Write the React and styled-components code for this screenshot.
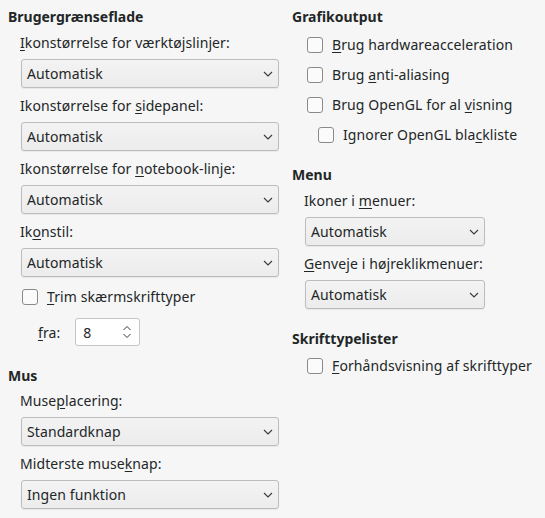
import styled, { createGlobalStyle } from "styled-components";

const GlobalStyle = createGlobalStyle`
  html, body {
    margin: 0;
    padding: 0;
    background: #f6f6f6;
  }
  body {
    font-family: "Noto Sans", "DejaVu Sans", sans-serif;
    font-size: 14px;
    letter-spacing: 0.1px;
    color: #232627;
  }
`;

const Page = styled.div`
  width: 545px;
  height: 518px;
  box-sizing: border-box;
  padding: 7px 0 0 8px;
  display: grid;
  grid-template-columns: 284px 1fr;
  overflow: hidden;
`;

const Column = styled.div`
  display: flex;
  flex-direction: column;
  gap: 20px;
`;

const Section = styled.section`
  display: flex;
  flex-direction: column;
`;

const Title = styled.div`
  font-weight: bold;
  letter-spacing: 0;
  line-height: 20px;
  height: 20px;
  margin-bottom: ${({ $gap }) => $gap ?? 6}px;
`;

const Body = styled.div`
  display: flex;
  flex-direction: column;
  gap: ${({ $gap }) => $gap ?? 8}px;
  padding-left: ${({ $indent }) => $indent ?? 12}px;
`;

const Field = styled.div`
  display: flex;
  flex-direction: column;
  gap: 6px;
`;

const Label = styled.div`
  line-height: 20px;
  height: 20px;
  white-space: nowrap;
`;

const Key = styled.span`
  text-decoration: underline;
  text-underline-offset: 2px;
`;

const Combo = styled.div`
  width: ${({ $width }) => $width}px;
  height: 29px;
  box-sizing: border-box;
  margin-left: 1px;
  border: 1px solid #bcbcbc;
  border-radius: 3px;
  background: linear-gradient(#f3f3f3, #ececec);
  box-shadow: 0 1px 1px rgba(0, 0, 0, 0.06);
  display: flex;
  align-items: center;
  justify-content: space-between;
  padding: 0 5px 0 5px;
  line-height: 20px;
`;

const Chevron = () => (
  <svg width="10" height="6" viewBox="0 0 10 6">
    <path d="M1 1 L5 5 L9 1" fill="none" stroke="#3a3a3a" strokeWidth="1.1" />
  </svg>
);

const CheckRow = styled.label`
  display: flex;
  align-items: center;
  gap: 9px;
  height: 20px;
  line-height: 20px;
  margin-top: ${({ $top }) => $top ?? 0}px;
  padding-left: ${({ $indent }) => $indent ?? 2}px;
  white-space: nowrap;
`;

const Box = styled.span`
  width: 16px;
  height: 16px;
  box-sizing: border-box;
  border: 1px solid #8a8a8a;
  border-radius: 3px;
  background: #fbfbfb;
  flex: none;
`;

const SpinRow = styled.div`
  display: flex;
  align-items: center;
  gap: 15px;
  padding-left: 18px;
  margin-top: 3px;
`;

const Spin = styled.div`
  width: 65px;
  height: 28px;
  box-sizing: border-box;
  border: 1px solid #c4c4c4;
  border-radius: 3px;
  background: #fff;
  display: flex;
  align-items: center;
  justify-content: space-between;
  padding: 0 7px 0 7px;
`;

const SpinArrows = () => (
  <svg width="10" height="16" viewBox="0 0 10 16">
    <path d="M1.5 6 L5 2.5 L8.5 6 M1.5 10 L5 13.5 L8.5 10" fill="none" stroke="#3a3a3a" strokeWidth="1" />
  </svg>
);

const ComboField = ({ label, value, width }) => (
  <Field>
    <Label>{label}</Label>
    <Combo $width={width}>
      <span>{value}</span>
      <Chevron />
    </Combo>
  </Field>
);

const Check = ({ children, indent, top }) => (
  <CheckRow $indent={indent} $top={top}>
    <Box />
    <span>{children}</span>
  </CheckRow>
);

export default function App() {
  return (
    <>
      <GlobalStyle />
      <Page>
        <Column>
          <Section>
            <Title>Brugergrænseflade</Title>
            <Body>
              <ComboField width={258} value="Automatisk" label={<><Key>I</Key>konstørrelse for værktøjslinjer:</>} />
              <ComboField width={258} value="Automatisk" label={<>Ikonstørrelse for <Key>s</Key>idepanel:</>} />
              <ComboField width={258} value="Automatisk" label={<>Ikonstørrelse for <Key>n</Key>otebook-linje:</>} />
              <ComboField width={258} value="Automatisk" label={<>Ik<Key>o</Key>nstil:</>} />
              <Check top={2}><Key>T</Key>rim skærmskrifttyper</Check>
              <SpinRow>
                <span><Key>f</Key>ra:</span>
                <Spin>
                  <span>8</span>
                  <SpinArrows />
                </Spin>
              </SpinRow>
            </Body>
          </Section>
          <Section>
            <Title $gap={5}>Mus</Title>
            <Body>
              <ComboField width={258} value="Standardknap" label={<>Muse<Key>p</Key>lacering:</>} />
              <ComboField width={258} value="Ingen funktion" label={<>Midterste muse<Key>k</Key>nap:</>} />
            </Body>
          </Section>
        </Column>
        <Column>
          <Section>
            <Title $gap={8}>Grafikoutput</Title>
            <Body $gap={10} $indent={13}>
              <Check><Key>B</Key>rug hardwareacceleration</Check>
              <Check>Brug <Key>a</Key>nti-aliasing</Check>
              <Check>Brug OpenGL for al <Key>v</Key>isning</Check>
              <Check indent={13}>Ignorer OpenGL bla<Key>c</Key>kliste</Check>
            </Body>
          </Section>
          <Section>
            <Title>Menu</Title>
            <Body>
              <ComboField width={180} value="Automatisk" label={<>Ikoner i <Key>m</Key>enuer:</>} />
              <ComboField width={180} value="Automatisk" label={<><Key>G</Key>enveje i højreklikmenuer:</>} />
            </Body>
          </Section>
          <Section>
            <Title $gap={7}>Skrifttypelister</Title>
            <Body $indent={13}>
              <Check><Key>F</Key>orhåndsvisning af skrifttyper</Check>
            </Body>
          </Section>
        </Column>
      </Page>
    </>
  );
}
